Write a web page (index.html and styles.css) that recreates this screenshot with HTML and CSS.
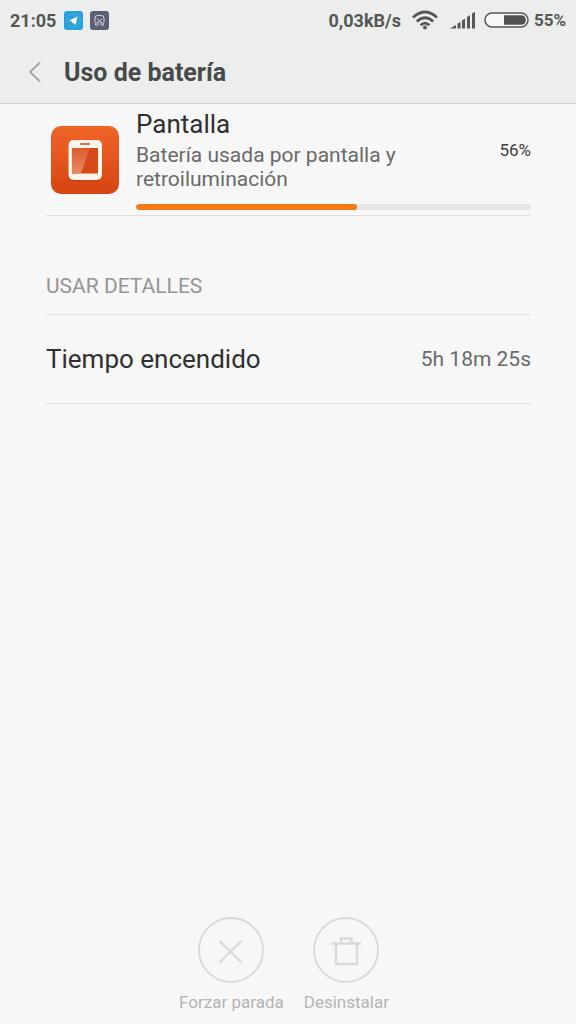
FILE: index.html
```html
<!DOCTYPE html>
<html lang="es">
<head>
<meta charset="utf-8">
<meta name="viewport" content="width=device-width, initial-scale=1">
<title>Uso de batería</title>
<link rel="stylesheet" href="styles.css">
</head>
<body>
<header class="top">
  <div class="status">
    <span class="clock">21:05</span>
    <svg class="badge" viewBox="0 0 19 19" aria-hidden="true"><rect width="19" height="19" rx="3" fill="#2aa1da"/><circle cx="9.500" cy="9.500" r="6.500" fill="none" stroke="#68c0e8" stroke-width=".8" stroke-dasharray="1.500 1"/><path d="M5 9.500 13.500 5.500 11.500 14 9 11.500 8 12.500 7.800 10.500Z" fill="#fff"/></svg>
    <svg class="badge" viewBox="0 0 19 19" aria-hidden="true"><rect width="19" height="19" rx="3" fill="#5b5f74"/><path d="M5 11V7Q5 4.500 7.500 4.500H11.500Q14 4.500 14 7V11M7 7.500 11.500 12M12 7.500 7.500 12" fill="none" stroke="#d9dae2" stroke-width="1"/><circle cx="6.700" cy="13" r="1.400" fill="none" stroke="#d9dae2"/><circle cx="12.300" cy="13" r="1.400" fill="none" stroke="#d9dae2"/></svg>
    <span class="speed">0,03kB/s</span>
    <svg class="wifi" viewBox="0 0 26 20" aria-hidden="true"><g fill="none" stroke="#555856" stroke-width="2.800"><path d="M1 7.500Q13-3.500 25 7.500"/><path d="M4.800 11.500Q13 3.900 21.200 11.500"/><path d="M8.600 15.200Q13 11 17.400 15.200"/></g><circle cx="13" cy="17.500" r="2" fill="#555856"/></svg>
    <svg class="signal" viewBox="0 0 26 18" aria-hidden="true"><path d="M0 17.500 6 14V17.500ZM7.500 12.500 10.500 11V17.500H7.500ZM12 9.500 15 7.500V17.500H12ZM17 6 20 4V17.500H17ZM22 2.500 25 .8V17.500H22Z" fill="#555856"/></svg>
    <svg class="battery" viewBox="0 0 46 16" aria-hidden="true"><rect x="1" y="1" width="43" height="14" rx="7" fill="#f5f6f5" stroke="#555856" stroke-width="1.500"/><path d="M20 3.200H37Q41.800 3.200 41.800 8T37 12.800H20Z" fill="#4e514f"/></svg>
    <span class="level">55%</span>
  </div>
  <div class="titlebar">
    <button class="back" type="button" aria-label="Atrás"><svg viewBox="0 0 14 22" aria-hidden="true"><path d="M12 1.500 2 11 12 20.500" fill="none" stroke="#a2a4a3" stroke-width="1.800"/></svg></button>
    <h1>Uso de batería</h1>
  </div>
</header>
<main>
  <section class="usage">
    <svg class="appicon" viewBox="0 0 70 70" aria-hidden="true">
      <defs>
        <linearGradient id="bg" x1="0" y1="0" x2="0" y2="1"><stop offset="0" stop-color="#f06528"/><stop offset="1" stop-color="#d64411"/></linearGradient>
        <linearGradient id="glare" x1="0" y1="0" x2="0" y2="1"><stop offset="0" stop-color="#db5a30"/><stop offset="1" stop-color="#ea8a63"/></linearGradient>
      </defs>
      <rect x="1" y="1" width="68" height="68" rx="10" fill="url(#bg)"/>
      <rect x="18" y="16" width="34" height="41" rx="5" fill="#b93b10" opacity=".45"/>
      <rect x="18.500" y="15" width="33.500" height="40" rx="5" fill="#fff3ea"/>
      <rect x="30" y="18" width="10" height="2" rx="1" fill="#e1683c"/>
      <rect x="22" y="23" width="26" height="25.500" fill="#d5481a"/>
      <path d="M22 23H40L31 48.500H22Z" fill="url(#glare)"/>
    </svg>
    <div class="info">
      <div class="summary">
        <div class="text">
          <h2>Pantalla</h2>
          <p>Batería usada por pantalla y retroiluminación</p>
        </div>
        <span class="percent">56%</span>
      </div>
      <progress value="56" max="100" aria-label="Batería usada por pantalla"></progress>
    </div>
  </section>
  <section class="details">
    <h3>USAR DETALLES</h3>
    <dl>
      <dt>Tiempo encendido</dt>
      <dd>5h 18m 25s</dd>
    </dl>
  </section>
</main>
<footer class="actions">
  <button type="button" disabled>
    <svg viewBox="0 0 66 66" aria-hidden="true"><g fill="none" stroke="#d9d9d9"><circle cx="33" cy="33" r="32" stroke-width="1.800"/><path d="M21.500 24 43.500 45.500M43.500 24 21.500 45.500" stroke-width="2.200"/></g></svg>
    <span>Forzar parada</span>
  </button>
  <button type="button" disabled>
    <svg viewBox="0 0 66 66" aria-hidden="true"><g fill="none" stroke="#d9d9d9"><circle cx="33" cy="33" r="32" stroke-width="1.800"/><path d="M18.500 26.500H48M23 26.500V47H44V26.500M28 26V21.500H38.500V26" stroke-width="2.400"/></g></svg>
    <span>Desinstalar</span>
  </button>
</footer>
</body>
</html>
```
FILE: styles.css
```css
* {
  box-sizing: border-box;
  margin: 0;
}

body {
  min-height: 100vh;
  display: flex;
  flex-direction: column;
  background: #f7f7f7;
  color: #303030;
  font-family: Roboto, "Liberation Sans", sans-serif;
}

button {
  padding: 0;
  border: 0;
  background: none;
  font: inherit;
}

svg {
  display: block;
  flex: none;
}

.top {
  background: #eceeed;
  border-bottom: 1px solid #d2d2d2;
}

.status {
  height: 40px;
  padding: 0 10px;
  display: flex;
  align-items: center;
  color: #555856;
  font-size: 18px;
  font-weight: 700;
}

.badge {
  width: 19px;
  height: 19px;
  margin-left: 7px;
}

.clock {
  margin-right: 1px;
}

.speed {
  margin-left: auto;
}

.wifi {
  width: 26px;
  height: 20px;
  margin-left: 11px;
}

.signal {
  width: 26px;
  height: 18px;
  margin-left: 12px;
}

.battery {
  width: 46px;
  height: 16px;
  margin-left: 8px;
}

.level {
  margin-left: 4px;
  font-size: 17px;
  font-weight: 700;
}

.titlebar {
  height: 63px;
  padding-left: 28px;
  display: flex;
  align-items: center;
  gap: 22px;
}

.back svg {
  width: 14px;
  height: 22px;
}

h1 {
  padding-top: 2px;
  color: #484a49;
  font-size: 25px;
  line-height: 32px;
  font-weight: 700;
}

main {
  flex: 1;
  padding: 0 45px 0 46px;
}

.usage {
  padding: 4px 0 5px;
  display: flex;
  align-items: flex-start;
  border-bottom: 1px solid #e0e0e0;
}

.appicon {
  width: 70px;
  height: 70px;
  margin: 17px 16px 0 4px;
}

.info {
  flex: 1;
}

.summary {
  display: flex;
  justify-content: space-between;
  align-items: center;
}

.text {
  max-width: 280px;
}

h2 {
  font-size: 26px;
  line-height: 32px;
  font-weight: 400;
}

.text p {
  margin-top: 3px;
  color: #6a6a6a;
  font-size: 21px;
  line-height: 24px;
}

.percent {
  color: #404040;
  font-size: 17px;
}

progress {
  display: block;
  width: 100%;
  height: 6px;
  margin-top: 13px;
  appearance: none;
  border: 0;
  border-radius: 3px;
  background: #e6e6e6;
  overflow: hidden;
}

progress::-webkit-progress-bar {
  background: #e6e6e6;
}

progress::-webkit-progress-value {
  border-radius: 3px;
  background: #f37a14;
}

.details {
  padding-top: 56px;
}

h3 {
  padding-bottom: 14px;
  border-bottom: 1px solid #e0e0e0;
  color: #959595;
  font-size: 21px;
  line-height: 28px;
  font-weight: 400;
}

dl {
  padding: 28px 0;
  display: flex;
  justify-content: space-between;
  align-items: center;
  border-bottom: 1px solid #e0e0e0;
}

dt {
  font-size: 26px;
  line-height: 32px;
}

dd {
  color: #6a6a6a;
  font-size: 21px;
}

.actions {
  padding: 0 18px 10px 10px;
  display: flex;
  justify-content: center;
  gap: 20px;
}

.actions button {
  display: flex;
  flex-direction: column;
  align-items: center;
  gap: 7px;
  color: #b4b4b4;
  font-size: 17px;
  line-height: 24px;
}

.actions svg {
  width: 66px;
  height: 66px;
}
```
